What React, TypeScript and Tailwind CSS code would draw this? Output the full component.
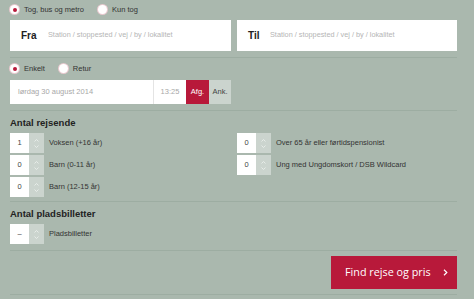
import React from "react";

const Radio = ({ checked, label }: { checked?: boolean; label: string }) => (
  <div className="flex items-center gap-[5px]">
    <span className="flex h-[9px] w-[9px] items-center justify-center rounded-full bg-white ring-1 ring-[#e8c9cf]">
      {checked && <span className="h-[4px] w-[4px] rounded-full bg-[#b8193a]" />}
    </span>
    <span className="text-[7.5px] text-[#333]">{label}</span>
  </div>
);

const Stepper = ({ value, label }: { value: string; label: string }) => (
  <div className="flex h-[20px] items-center">
    <div className="flex h-full w-[19px] items-center justify-center bg-white text-[7.5px] text-[#444]">
      {value}
    </div>
    <div className="flex h-full w-[15px] flex-col items-center justify-center gap-[3px] bg-[#cbd4ce]">
      <svg width="5" height="3" viewBox="0 0 5 3">
        <path d="M0.5 2.5 L2.5 0.5 L4.5 2.5" fill="none" stroke="#eef2ef" strokeWidth="0.8" />
      </svg>
      <svg width="5" height="3" viewBox="0 0 5 3">
        <path d="M0.5 0.5 L2.5 2.5 L4.5 0.5" fill="none" stroke="#eef2ef" strokeWidth="0.8" />
      </svg>
    </div>
    <span className="ml-[5px] text-[7.5px] text-[#333]">{label}</span>
  </div>
);

const Line = () => <div className="h-px bg-[#9dada2]" />;

export default function App() {
  return (
    <div
      className="h-[299px] w-[474px] overflow-hidden bg-[#aab8ae] px-[10px] pt-[3px]"
      style={{ fontFamily: '"Liberation Sans", Arial, sans-serif' }}
    >
      <div className="w-[447px]">
        <div className="flex h-[13px] items-center gap-[14px]">
          <Radio checked label="Tog, bus og metro" />
          <Radio label="Kun tog" />
        </div>

        <div className="mt-[4px] flex gap-[6px]">
          <div className="flex h-[31px] w-[221px] items-center bg-white pl-[11px]">
            <span className="w-[27px] text-[10px] font-bold text-[#222]">Fra</span>
            <span className="text-[7.3px] text-[#b5b5b5]">
              Station / stoppested / vej / by / lokalitet
            </span>
          </div>
          <div className="flex h-[31px] w-[220px] items-center bg-white pl-[11px]">
            <span className="w-[22px] text-[10px] font-bold text-[#222]">Til</span>
            <span className="text-[7.3px] text-[#b5b5b5]">
              Station / stoppested / vej / by / lokalitet
            </span>
          </div>
        </div>

        <div className="mt-[6px]">
          <Line />
        </div>

        <div className="mt-[4px] flex h-[13px] items-center gap-[14px]">
          <Radio checked label="Enkelt" />
          <Radio label="Retur" />
        </div>

        <div className="mt-[5px] flex h-[24px] w-[221px]">
          <div className="flex w-[143px] items-center bg-white pl-[8px] text-[7.5px] text-[#a8a8a8]">
            lørdag 30 august 2014
          </div>
          <div className="flex w-[33px] items-center justify-center border-l border-[#e4e4e4] bg-white text-[7.5px] text-[#a8a8a8]">
            13:25
          </div>
          <div className="flex w-[23px] items-center justify-center bg-[#b8193a] text-[7.5px] text-white">
            Afg.
          </div>
          <div className="flex w-[22px] items-center justify-center bg-[#cbd4ce] text-[7.5px] text-[#444]">
            Ank.
          </div>
        </div>

        <div className="mt-[6px]">
          <Line />
        </div>

        <div className="mt-[6px] text-[9.5px] font-bold leading-[12px] text-[#222]">
          Antal rejsende
        </div>

        <div className="mt-[4px] flex gap-[6px]">
          <div className="flex w-[221px] flex-col gap-[2px]">
            <Stepper value="1" label="Voksen (+16 år)" />
            <Stepper value="0" label="Barn (0-11 år)" />
            <Stepper value="0" label="Barn (12-15 år)" />
          </div>
          <div className="flex w-[220px] flex-col gap-[2px]">
            <Stepper value="0" label="Over 65 år eller førtidspensionist" />
            <Stepper value="0" label="Ung med Ungdomskort / DSB Wildcard" />
          </div>
        </div>

        <div className="mt-[4px]">
          <Line />
        </div>

        <div className="mt-[6px] text-[9.5px] font-bold leading-[12px] text-[#222]">
          Antal pladsbilletter
        </div>

        <div className="mt-[4px]">
          <Stepper value="–" label="Pladsbilletter" />
        </div>

        <div className="mt-[6px]">
          <Line />
        </div>

        <div className="mt-[5px] flex justify-end">
          <div
            className="flex h-[33px] w-[126px] items-center justify-between bg-[#b8193a] pl-[14px] pr-[9px] text-[10.8px] text-white"
            style={{ fontFamily: '"Open Sans", sans-serif' }}
          >
            <span>Find rejse og pris</span>
            <svg width="5" height="7" viewBox="0 0 5 7">
              <path d="M1 0.8 L3.8 3.5 L1 6.2" fill="none" stroke="white" strokeWidth="1.2" />
            </svg>
          </div>
        </div>

        <div className="mt-[5px]">
          <Line />
        </div>
      </div>
    </div>
  );
}
